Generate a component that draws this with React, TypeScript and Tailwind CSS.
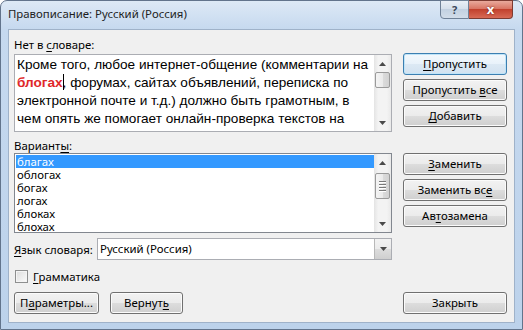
import type { ReactNode } from 'react';

function Arrow({ up }: { up?: boolean }) {
  return (
    <svg width="7" height="4" viewBox="0 0 7 4">
      <path d={up ? 'M0 4 L3.5 0 L7 4Z' : 'M0 0 L7 0 L3.5 4Z'} fill="#4a4a4a" />
    </svg>
  );
}

function ScrollBar({ thumb, grip }: { thumb: string; grip?: boolean }) {
  return (
    <div className="w-[17px] h-full flex flex-col shrink-0 bg-[linear-gradient(90deg,#e4e4e4,#f3f3f3_25%,#f3f3f3_75%,#e9e9e9)]">
      <div className="h-[17px] flex items-center justify-center">
        <Arrow up />
      </div>
      <div className="flex-1 flex flex-col">
        <div
          className={`mx-[1px] rounded-[2px] border border-[#9a9a9a] bg-[linear-gradient(90deg,#f4f4f4,#ebebeb_50%,#dcdcdc_50%,#d2d2d2)] flex flex-col items-center justify-center gap-[2px] ${thumb}`}
        >
          {grip &&
            [0, 1, 2, 3].map((i) => (
              <div key={i} className="w-[7px] h-px bg-[#7a7a7a] shadow-[0_1px_0_#fff]" />
            ))}
        </div>
      </div>
      <div className="h-[17px] flex items-center justify-center">
        <Arrow />
      </div>
    </div>
  );
}

function Btn({ children, className = '', def }: { children: ReactNode; className?: string; def?: boolean }) {
  return (
    <div
      className={`h-[22px] flex items-center justify-center rounded-[3px] border ${
        def
          ? 'border-[#3c7fb1] shadow-[inset_0_0_0_1px_#bfe4f8] bg-[linear-gradient(#f3f8fc,#e8f2fa_50%,#dce9f4_50%,#d2e2f0)]'
          : 'border-[#707070] shadow-[inset_0_0_0_1px_#fbfbfb] bg-[linear-gradient(#f2f2f2,#ebebeb_50%,#dddddd_50%,#cfcfcf)]'
      } ${className}`}
    >
      {children}
    </div>
  );
}

function U({ children }: { children: ReactNode }) {
  return <span className="underline underline-offset-2">{children}</span>;
}

const variants = ['благах', 'облогах', 'богах', 'логах', 'блоках', 'блохах'];

export default function App() {
  return (
    <div className="w-[523px] h-[330px] bg-white font-['Noto_Sans',sans-serif] text-[11.4px] text-black">
      <div className="w-full h-full rounded-t-[7px] border border-[#62748c] bg-[linear-gradient(#dde9f6,#c6d9ef_28px,#bcd2eb)] flex flex-col">
        <div className="h-[28px] flex items-start justify-between">
          <div className="pl-[7px] pt-[5px] text-[11.4px] leading-[16px] text-[#1e1e1e]">Правописание: Русский (Россия)</div>
          <div className="mr-[9px] -mt-px flex">
            <div className="w-[29px] h-[19px] rounded-bl-[4px] border border-[#6f8197] bg-[linear-gradient(#e9eff6,#d4dfeb_50%,#c3d1e1_50%,#d2dde9)] flex items-center justify-center text-[11px] font-bold text-[#3a4658] leading-none">
              ?
            </div>
            <div className="w-[44px] h-[19px] rounded-br-[4px] border border-l-0 border-[#7d3b32] bg-[linear-gradient(#e9a99c,#d7705f_50%,#c2412e_50%,#d86a55)] flex items-center justify-center text-white font-bold text-[13px] leading-none [text-shadow:0_0_2px_#5a1a10]">
              x
            </div>
          </div>
        </div>

        <div className="mx-[7px] w-[507px] h-[294px] border border-[#9fb2c9] bg-[#f0f0f0] pl-[5px] pt-[7px]">
          <div className="flex gap-[11px]">
            <div className="w-[378px] flex flex-col">
              <div className="h-[15px] leading-[15px]">
                Нет в <U>с</U>ловаре:
              </div>
              <div className="mt-[2px] h-[78px] border border-[#abadb3] bg-white flex">
                <div className="flex-1 overflow-hidden pl-[2px] pt-[1px] font-['Liberation_Sans',sans-serif] text-[13.6px] leading-[18px] whitespace-nowrap">
                  <div>Кроме того, любое интернет-общение (комментарии на</div>
                  <div>
                    <span className="font-bold text-[#e0282a]">блогах</span>
                    <span className="inline-block w-px h-[16px] bg-black align-[-3px] -mr-px" />, форумах, сайтах объявлений, переписка по
                  </div>
                  <div>электронной почте и т.д.) должно быть грамотным, в</div>
                  <div>чем опять же помогает онлайн-проверка текстов на</div>
                  <div className="h-[3px] overflow-hidden">орфографию.</div>
                </div>
                <ScrollBar thumb="h-[16px]" />
              </div>

              <div className="mt-[6px] h-[15px] leading-[15px]">
                Вариант<U>ы</U>:
              </div>
              <div className="h-[80px] border border-[#82878f] bg-white flex">
                <div className="flex-1 pt-[1px] pl-[1px] leading-[13px]">
                  {variants.map((v, i) => (
                    <div key={v} className={`h-[13px] pl-[1px] ${i === 0 ? 'bg-[#3399ff] text-white' : ''}`}>
                      {v}
                    </div>
                  ))}
                </div>
                <ScrollBar thumb="mt-[2px] h-[26px]" grip />
              </div>

              <div className="mt-[5px] h-[22px] flex items-center">
                <div className="w-[83px] shrink-0 leading-[15px]">
                  <U>Я</U>зык словаря:
                </div>
                <div className="flex-1 h-[22px] border border-[#abadb3] bg-white flex items-center">
                  <div className="flex-1 pl-[2px]">Русский (Россия)</div>
                  <div className="w-[17px] h-[20px] border-l border-[#b8b8b8] bg-[linear-gradient(#f2f2f2,#ebebeb_50%,#dddddd_50%,#cfcfcf)] flex items-center justify-center">
                    <Arrow />
                  </div>
                </div>
              </div>
            </div>

            <div className="w-[104px] flex flex-col pt-[16px]">
              <Btn def>
                <span>
                  <U>П</U>ропустить
                </span>
              </Btn>
              <Btn className="mt-[4px]">
                <span>
                  Пропустить <U>в</U>се
                </span>
              </Btn>
              <Btn className="mt-[4px]">
                <span>
                  <U>Д</U>обавить
                </span>
              </Btn>
              <Btn className="mt-[26px]">
                <span>
                  <U>З</U>аменить
                </span>
              </Btn>
              <Btn className="mt-[4px]">
                <span>
                  Заменить вс<U>е</U>
                </span>
              </Btn>
              <Btn className="mt-[4px]">
                <span>
                  Ав<U>т</U>озамена
                </span>
              </Btn>
            </div>
          </div>

          <div className="mt-[9px] h-[15px] flex items-center gap-[5px] pl-[1px]">
            <div className="w-[13px] h-[13px] border border-[#8e8f8f] bg-[linear-gradient(135deg,#dcdcdc,#fbfbfb)] shadow-[inset_0_0_0_1px_#f4f4f4]" />
            <div className="leading-[15px]">
              <U>Г</U>рамматика
            </div>
          </div>

          <div className="mt-[8px] flex">
            <Btn className="w-[85px]">
              <span>
                П<U>а</U>раметры...
              </span>
            </Btn>
            <Btn className="w-[73px] ml-[11px]">
              <span>
                Вернут<U>ь</U>
              </span>
            </Btn>
            <Btn className="w-[104px] ml-auto mr-[7px]">Закрыть</Btn>
          </div>
        </div>
      </div>
    </div>
  );
}
